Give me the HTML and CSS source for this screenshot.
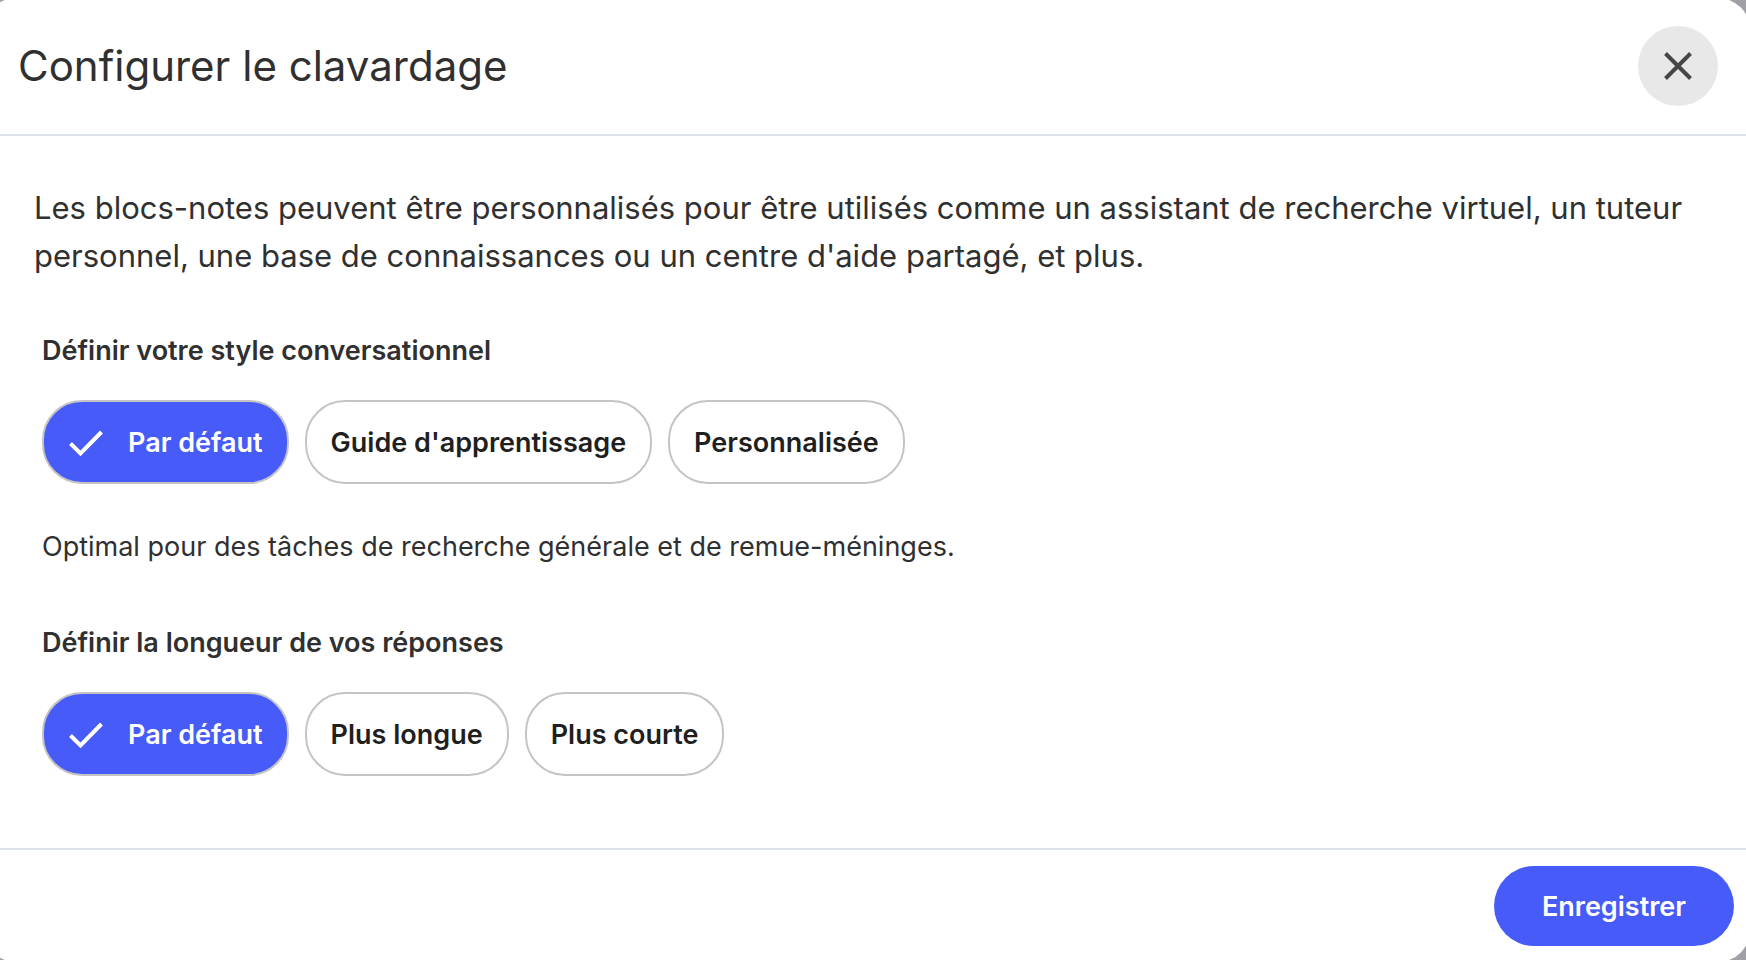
FILE: index.html
```html
<!DOCTYPE html>
<html lang="fr">
<head>
    <meta charset="UTF-8">
    <meta name="viewport" content="width=device-width, initial-scale=1.0">
    <title>Configurer le clavardage</title>
    <link rel="stylesheet" href="styles.css">
</head>
<body>
    <form class="dialog" role="dialog" aria-labelledby="dialog-title">
        <header class="dialog-header">
            <h1 id="dialog-title">Configurer le clavardage</h1>
            <button type="button" class="close-button" aria-label="Fermer">
                <svg viewBox="0 0 28 28" width="28" height="28" aria-hidden="true">
                    <path d="M1.5 1.5L26.5 26.5M26.5 1.5L1.5 26.5" fill="none" stroke="#444746" stroke-width="4"/>
                </svg>
            </button>
        </header>

        <main class="dialog-content">
            <p class="intro">Les blocs-notes peuvent être personnalisés pour être utilisés comme un assistant de recherche virtuel, un tuteur personnel, une base de connaissances ou un centre d'aide partagé, et plus.</p>

            <!-- Style conversationnel -->
            <fieldset class="option-group">
                <legend>Définir votre style conversationnel</legend>
                <div class="chips">
                    <label class="chip">
                        <input type="radio" name="style" value="default" checked>
                        <svg class="check" viewBox="0 0 36 36" width="36" height="36" aria-hidden="true">
                            <path d="M2.500 19.500L12.500 29.500L33.500 8" fill="none" stroke="currentColor" stroke-width="4"/>
                        </svg>
                        <span>Par défaut</span>
                    </label>
                    <label class="chip">
                        <input type="radio" name="style" value="guide">
                        <span>Guide d'apprentissage</span>
                    </label>
                    <label class="chip">
                        <input type="radio" name="style" value="custom">
                        <span>Personnalisée</span>
                    </label>
                </div>
                <p class="hint">Optimal pour des tâches de recherche générale et de remue-méninges.</p>
            </fieldset>

            <!-- Longueur des réponses -->
            <fieldset class="option-group">
                <legend>Définir la longueur de vos réponses</legend>
                <div class="chips">
                    <label class="chip">
                        <input type="radio" name="length" value="default" checked>
                        <svg class="check" viewBox="0 0 36 36" width="36" height="36" aria-hidden="true">
                            <path d="M2.500 19.500L12.500 29.500L33.500 8" fill="none" stroke="currentColor" stroke-width="4"/>
                        </svg>
                        <span>Par défaut</span>
                    </label>
                    <label class="chip">
                        <input type="radio" name="length" value="longer">
                        <span>Plus longue</span>
                    </label>
                    <label class="chip">
                        <input type="radio" name="length" value="shorter">
                        <span>Plus courte</span>
                    </label>
                </div>
            </fieldset>
        </main>

        <footer class="dialog-footer">
            <button type="submit" class="save-button">Enregistrer</button>
        </footer>
    </form>
</body>
</html>
```
FILE: styles.css
```css
* {
    box-sizing: border-box;
}

body {
    margin: 0;
    overflow: hidden;
    background-color: #a0a0a6;
    color: #303030;
    font-family: Inter, "Open Sans", sans-serif;
}

/* La boîte dépasse légèrement de la fenêtre */
.dialog {
    display: flex;
    flex-direction: column;
    min-height: calc(100vh + 4px);
    margin: -2px -4px -2px -16px;
    border-radius: 32px;
    background-color: #fff;
}

.dialog-header {
    display: flex;
    align-items: center;
    justify-content: space-between;
    padding: 28px 32px 28px 34px;
    border-bottom: 2px solid #dde1eb;
}

h1 {
    margin: 0;
    font-size: 42px;
    font-weight: 400;
    line-height: 56px;
}

.close-button {
    display: flex;
    align-items: center;
    justify-content: center;
    width: 80px;
    height: 80px;
    padding: 0;
    border: none;
    border-radius: 50%;
    background-color: #e8e8e8;
    cursor: pointer;
}

.dialog-content {
    flex: 1;
    padding: 48px 50px 72px;
}

.intro {
    margin: 0 0 51px;
    font-size: 31px;
    line-height: 48px;
}

.option-group {
    margin: 0 8px;
    padding: 0;
    border: none;
}

.option-group + .option-group {
    margin-top: 56px;
}

legend {
    margin-bottom: 29px;
    padding: 0;
    font-size: 27px;
    font-weight: 600;
    line-height: 40px;
}

.chips {
    display: flex;
    flex-wrap: wrap;
    gap: 16px;
}

.chip {
    display: flex;
    align-items: center;
    gap: 24px;
    height: 84px;
    padding: 0 24px;
    border: 2px solid #c4c4c4;
    border-radius: 40px;
    color: #1f1f1f;
    font-size: 27px;
    font-weight: 600;
    cursor: pointer;
}

.chip input {
    position: absolute;
    opacity: 0;
}

.chip:has(input:checked) {
    background-color: #475bf9;
    color: #fff;
}

.hint {
    margin: 43px 0 0;
    font-size: 27px;
    line-height: 40px;
}

.dialog-footer {
    display: flex;
    justify-content: flex-end;
    padding: 16px;
    border-top: 2px solid #dde1e9;
}

.save-button {
    height: 80px;
    padding: 0 48px;
    border: none;
    border-radius: 40px;
    background-color: #475bf9;
    color: #fff;
    font-family: inherit;
    font-size: 27px;
    font-weight: 600;
    cursor: pointer;
}
```
